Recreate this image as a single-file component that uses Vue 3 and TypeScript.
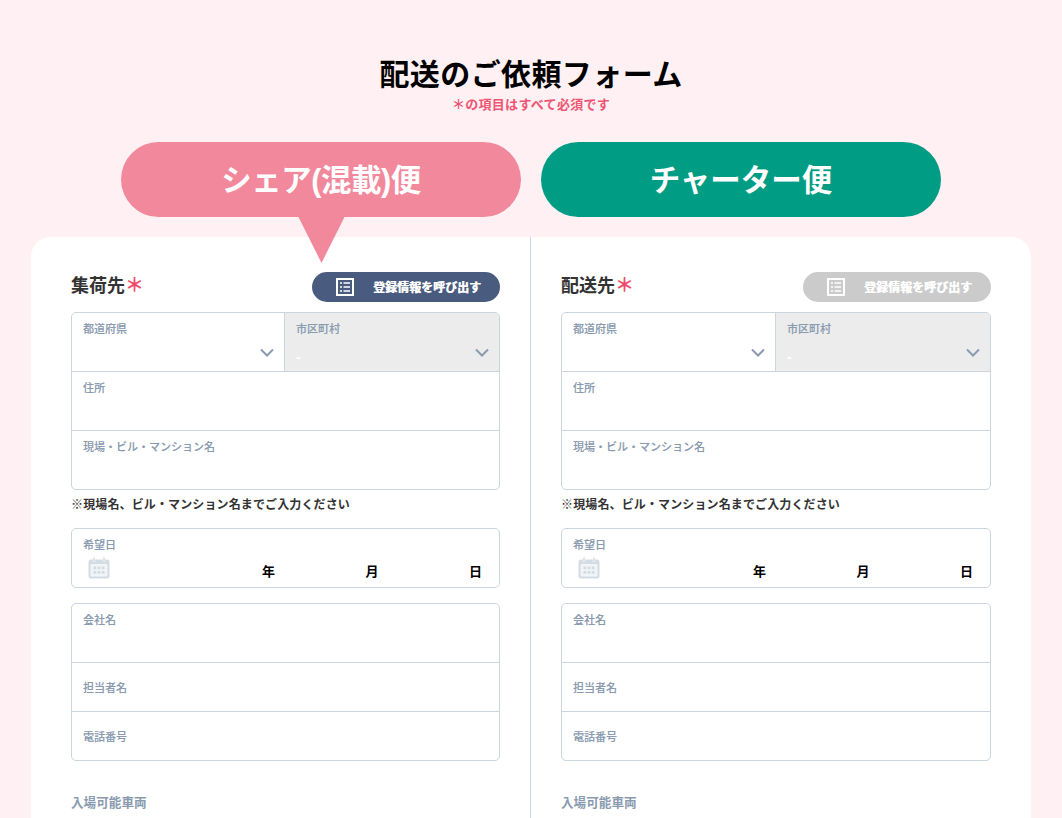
<script setup lang="ts">
const columns = [
  { title: '集荷先', disabled: false },
  { title: '配送先', disabled: true },
]
</script>

<template>
  <div class="page">
    <h1 class="title">配送のご依頼フォーム</h1>
    <p class="required-note">＊の項目はすべて必須です</p>

    <div class="tabs">
      <div class="tab tab-share">
        シェア(混載)便
        <svg class="tab-tail" width="48" height="47" viewBox="0 0 48 47"><polygon points="0,0 47,0 23.5,47" fill="#f2889b" /></svg>
      </div>
      <div class="tab tab-charter">チャーター便</div>
    </div>

    <div class="card">
      <section v-for="col in columns" :key="col.title" class="col">
        <div class="col-head">
          <h2 class="col-title">{{ col.title }}<span class="star">＊</span></h2>
          <button class="load-btn" :class="{ disabled: col.disabled }" type="button">
            <svg width="18" height="18" viewBox="0 0 18 18" fill="none">
              <rect x="1" y="1" width="16" height="16" stroke="#fff" stroke-width="2" />
              <path d="M4 5h2M4 9h2M4 13h2M7.5 5H14M7.5 9H14M7.5 13H14" stroke="#fff" stroke-width="1.6" />
            </svg>
            <span>登録情報を呼び出す</span>
          </button>
        </div>

        <div class="box">
          <div class="row split">
            <div class="field select">
              <label>都道府県</label>
              <svg class="chev" width="14" height="9" viewBox="0 0 14 9" fill="none"><path d="M1 1.5l6 6 6-6" stroke="#8a9bb0" stroke-width="2" /></svg>
            </div>
            <div class="field locked">
              <label>市区町村</label>
              <span class="dash">-</span>
              <svg class="chev" width="14" height="9" viewBox="0 0 14 9" fill="none"><path d="M1 1.5l6 6 6-6" stroke="#8a9bb0" stroke-width="2" /></svg>
            </div>
          </div>
          <div class="row"><div class="field"><label>住所</label></div></div>
          <div class="row"><div class="field"><label>現場・ビル・マンション名</label></div></div>
        </div>
        <p class="hint">※現場名、ビル・マンション名までご入力ください</p>

        <div class="box date-box">
          <div class="field date">
            <label>希望日</label>
            <div class="date-line">
              <svg class="cal" width="22" height="22" viewBox="0 0 22 22">
                <rect x="0.5" y="2.5" width="21" height="19" rx="2.5" fill="#d3dbe3" />
                <rect x="2.5" y="7" width="17" height="12.5" rx="1" fill="#f2f5f7" />
                <rect x="5" y="0" width="2" height="5" rx="1" fill="#d3dbe3" stroke="#fff" stroke-width="0.5" />
                <rect x="15" y="0" width="2" height="5" rx="1" fill="#d3dbe3" stroke="#fff" stroke-width="0.5" />
                <path d="M5.5 9.5h2.8v2.8H5.5zM9.6 9.5h2.8v2.8H9.6zM13.7 9.5h2.8v2.8h-2.8zM5.5 14h2.8v2.8H5.5zM9.6 14h2.8v2.8H9.6zM13.7 14h2.8v2.8h-2.8z" fill="#d3dbe3" />
              </svg>
              <div class="date-units"><span>年</span><span>月</span><span>日</span></div>
            </div>
          </div>
        </div>

        <div class="box company-box">
          <div class="row"><div class="field"><label>会社名</label></div></div>
          <div class="row short"><div class="field"><label>担当者名</label></div></div>
          <div class="row short"><div class="field"><label>電話番号</label></div></div>
        </div>

        <h3 class="vehicle-label">入場可能車両</h3>
      </section>
    </div>
  </div>
</template>

<style scoped>
.page {
  height: 818px;
  overflow: hidden;
  box-sizing: border-box;
  background: #fff0f3;
  padding-top: 53px;
  font-family: "Liberation Sans", "Noto Sans CJK JP", sans-serif;
  color: #333;
}

.title {
  margin: 0;
  height: 43px;
  font-size: 30px;
  line-height: 44px;
  letter-spacing: 0.4px;
  font-weight: 700;
  color: #000;
  text-align: center;
}

.required-note {
  margin: 0;
  height: 19px;
  font-size: 13px;
  line-height: 18px;
  letter-spacing: 0.3px;
  font-weight: 700;
  color: #ee5573;
  text-align: center;
}

.tabs {
  display: flex;
  gap: 20px;
  width: 820px;
  margin: 27px 0 20px 121px;
}

.tab {
  position: relative;
  width: 400px;
  height: 75px;
  border-radius: 38px;
  font-size: 30.5px;
  line-height: 77px;
  font-weight: 700;
  color: #fff;
  text-align: center;
}

.tab-share {
  background: #f2889b;
  letter-spacing: -0.5px;
}

.tab-charter {
  background: #009c84;
}

.tab-tail {
  position: absolute;
  left: 177px;
  top: 74px;
  z-index: 1;
}

.card {
  display: flex;
  width: 1000px;
  margin-left: 31px;
  background: #fff;
  border-radius: 20px 20px 0 0;
  min-height: 620px;
}

.col {
  box-sizing: border-box;
  width: 500px;
  padding: 35px 40px 0 30px;
}

.col:first-child {
  padding: 35px 30px 0 40px;
  border-right: 1px solid #ccd4dc;
}

.col-head {
  display: flex;
  align-items: center;
  justify-content: space-between;
  height: 30px;
  margin-bottom: 10px;
}

.col-title {
  margin: 0 0 3px;
  font-size: 18px;
  line-height: 28px;
  font-weight: 700;
  color: #333;
}

.star {
  color: #f0486b;
  font-size: 19px;
  line-height: 0;
}

.load-btn {
  display: flex;
  align-items: center;
  width: 188px;
  height: 30px;
  padding: 0 0 0 24px;
  border: 0;
  border-radius: 15px;
  background: #4a5b80;
  color: #fff;
  font-family: inherit;
  font-size: 12px;
  font-weight: 700;
  text-shadow: 0.5px 0 0 #fff;
}

.load-btn span {
  margin-left: 19px;
  margin-bottom: 1px;
}

.load-btn.disabled {
  background: #cbcbcb;
}

.box {
  border: 1px solid #ccd4dc;
  border-radius: 5px;
  overflow: hidden;
}

.row {
  height: 58px;
  border-top: 1px solid #ccd4dc;
  display: flex;
}

.row:first-child {
  border-top: 0;
}

.row.short {
  height: 48px;
}

.row.short .field {
  padding-top: 17px;
}

.field {
  position: relative;
  flex: 1;
  box-sizing: border-box;
  padding: 8px 11px 0;
}

.field label {
  display: block;
  font-size: 11px;
  line-height: 16px;
  font-weight: 500;
  color: #8a9bb0;
  text-shadow: 0.25px 0 0 rgba(138, 155, 176, 0.35);
}

.select {
  flex: 0 0 213px;
}

.col:first-child .select {
  flex-basis: 212px;
}

.locked {
  border-left: 1px solid #ccd4dc;
  background: #ececec;
}

.dash {
  display: block;
  margin-top: 12px;
  font-size: 14px;
  line-height: 16px;
  font-weight: 700;
  color: #fff;
}

.chev {
  position: absolute;
  right: 10px;
  top: 35px;
}

.hint {
  margin: 6px 0 14px;
  font-size: 12px;
  line-height: 18px;
  letter-spacing: 0.13px;
  font-weight: 700;
  color: #333;
}

.date-box {
  height: 60px;
  box-sizing: border-box;
}

.date-line {
  display: flex;
  align-items: flex-start;
  padding-left: 5px;
}

.cal {
  margin-top: 4px;
}

.date-units {
  flex: 1;
  display: grid;
  grid-template-columns: repeat(3, 103.5px);
  justify-content: end;
  justify-items: end;
  font-size: 13px;
  line-height: 18px;
  font-weight: 700;
  color: #000;
  padding: 10px 6px 0 0;
}

.company-box {
  margin-top: 15px;
}

.vehicle-label {
  margin: 33px 0 0;
  font-size: 12.6px;
  line-height: 18px;
  font-weight: 700;
  color: #8a9bb0;
}
</style>

<style>
html,
body {
  overflow: hidden;
}
</style>
